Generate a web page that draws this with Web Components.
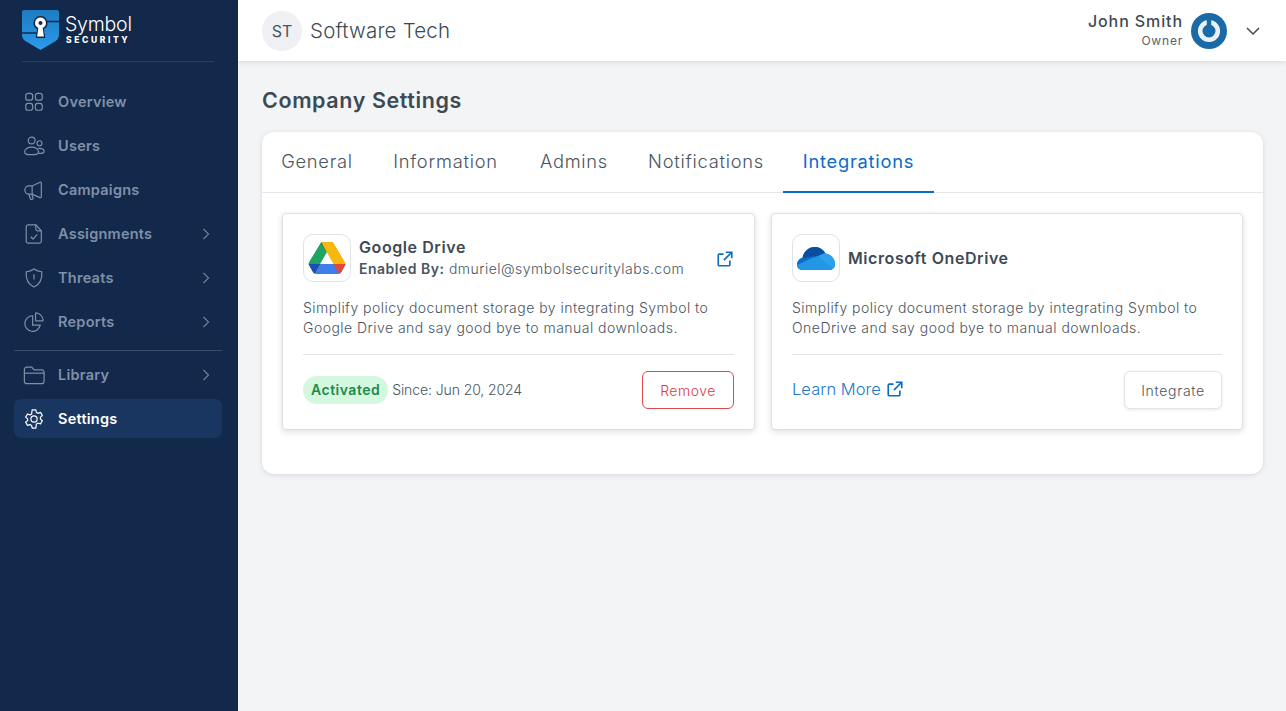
<!DOCTYPE html>
<html lang="en">
<head>
<meta charset="utf-8">
<title>Company Settings</title>
<style>
  html, body { margin: 0; height: 100%; }
  body { font-family: "Inter", "Liberation Sans", sans-serif; background: #f3f4f6; color: #3d4a55; }
</style>
</head>
<body>
<app-shell>
  <side-nav slot="nav">
    <nav-item label="Overview" icon="grid"></nav-item>
    <nav-item label="Users" icon="users"></nav-item>
    <nav-item label="Campaigns" icon="megaphone"></nav-item>
    <nav-item label="Assignments" icon="file" chevron></nav-item>
    <nav-item label="Threats" icon="shield" chevron></nav-item>
    <nav-item label="Reports" icon="pie" chevron></nav-item>
    <nav-divider></nav-divider>
    <nav-item label="Library" icon="folder" chevron></nav-item>
    <nav-item label="Settings" icon="gear" active></nav-item>
  </side-nav>
  <top-bar slot="top"></top-bar>
  <settings-page>
    <integration-card name="Google Drive" logo="drive" by="dmuriel@symbolsecuritylabs.com">
      Simplify policy document storage by integrating Symbol to<br>Google Drive and say good bye to manual downloads.
    </integration-card>
    <integration-card name="Microsoft OneDrive" logo="onedrive">
      Simplify policy document storage by integrating Symbol to<br>OneDrive and say good bye to manual downloads.
    </integration-card>
  </settings-page>
</app-shell>

<script>
const ICONS = {
  grid: '<rect x="3" y="2.500" width="7.500" height="7.500" rx="2.500"/><rect x="13.500" y="2.500" width="7.500" height="7.500" rx="2.500"/><rect x="3" y="13.500" width="7.500" height="7.500" rx="2.500"/><rect x="13.500" y="13.500" width="7.500" height="7.500" rx="2.500"/>',
  users: '<circle cx="9.500" cy="6" r="3.700"/><circle cx="18" cy="9" r="2.700"/><path d="M6.500 21.500c-3 0-4.700-1.200-4.700-3.100 0-3 3.300-5.200 7.600-5.200 4.200 0 7.500 2.200 7.500 5.200 0 1.900-1.700 3.100-4.700 3.100z"/><path d="M16.500 14.600c.6-.1 1-.1 1.500-.1 3 0 5 1.400 5 3.300 0 1.400-1.300 2.200-3.300 2.200h-3"/>',
  megaphone: '<path d="M18.500 3.500 10 7.600H6.500a4.500 4.500 0 0 0 0 9H10l8.500 3.700c.8.300 1.500-.1 1.500-1V4.500c0-.9-.7-1.300-1.500-1z"/><path d="M10 7.600v9"/><path d="M6.500 16.600 8 21.500c.2.700.9 1 1.600.8l.5-.2c.7-.2 1-.9.8-1.500L9.700 16.600"/>',
  file: '<path d="M5.500 2h8.500l6 6.500V20a2 2 0 0 1-2 2H5.500a2 2 0 0 1-2-2V4a2 2 0 0 1 2-2z"/><path d="M14 2v4.500a2 2 0 0 0 2 2h4"/><path d="m8.500 15 2.500 2.500 4.500-5"/>',
  shield: '<path d="M12 2.200c2.300 1.700 5 2.700 8.500 3 .6 7.800-1.800 13.500-8.500 16.600C5.300 18.700 2.900 13 3.500 5.200c3.500-.3 6.200-1.300 8.500-3z"/><path d="M12 8v5.500M12 16.300v.4"/>',
  pie: '<path d="M10.500 5.200a8.500 8.500 0 1 0 8.300 10.300H10.500z"/><path d="M14 2c4.200.2 7.600 3.600 8 8 0 .5-.3.800-.8.800H14.500a.8.800 0 0 1-.8-.8V2.800c0-.5-.2-.8.300-.8z"/>',
  folder: '<path d="M1.500 6a2.500 2.500 0 0 1 2.500-2.500h5.500l2.500 3h9A2.500 2.500 0 0 1 23 9v10a2.500 2.500 0 0 1-2.500 2.500H4A2.500 2.500 0 0 1 1.500 19z"/><path d="M1.500 10h21.500"/>',
  gear: '<circle cx="12" cy="12" r="3.400"/><path d="M10 2h4l.6 2.900 1.700.9 2.800-1 2 3.400-2.200 2 .1 1.800 2.100 1.900-2 3.400-2.800-.9-1.700 1L14 22h-4l-.6-3-1.700-.9-2.800.9-2-3.400 2.200-1.900v-1.800l-2.200-2 2-3.400 2.800 1 1.700-1z" stroke-linejoin="round"/>'
};

function define(name, css, html) {
  customElements.define(name, class extends HTMLElement {
    connectedCallback() {
      if (this.shadowRoot) return;
      this.attachShadow({ mode: 'open' });
      this.shadowRoot.innerHTML = '<style>' + css + '</style>' + (typeof html === 'function' ? html(this) : html);
    }
  });
}

define('app-shell', `
  :host { display: grid; grid-template-columns: 238px 1fr; grid-template-rows: 61px 1fr; height: 711px; overflow: hidden; }
  .nav { grid-row: 1 / 3; display: flex; }
  .top { position: relative; z-index: 1; }
`, `<div class="nav"><slot name="nav"></slot></div><div class="top"><slot name="top"></slot></div><main><slot></slot></main>`);

define('side-nav', `
  :host { display: block; width: 238px; box-sizing: border-box; background: #13294b; padding: 0 16px 0 14px; }
  .logo { display: flex; align-items: flex-start; height: 62px; box-sizing: border-box; margin: 0 0 0 8px; padding-top: 10px; border-bottom: 1px solid #2a3f60; width: 192px; }
  svg { display: block; flex: none; }
  .word { margin-left: 6px; color: #fff; line-height: 1; padding-top: 4px; }
  .sym { font-size: 19.500px; font-weight: 300; display: block; letter-spacing: -.2px; line-height: 20px; }
  .sec { font-size: 8.500px; font-weight: 800; letter-spacing: 2.600px; display: block; line-height: 9px; margin-top: 2px; margin-left: 1px; }
  .items { padding-top: 18px; }
`, `
  <div class="logo">
    <svg width="37" height="40" viewBox="0 0 37 40">
      <defs><linearGradient id="g" x1="0" y1="0" x2="0" y2="1"><stop offset="0" stop-color="#1e7cc0"/><stop offset="1" stop-color="#2a9bec"/></linearGradient></defs>
      <path d="M2 0h33a2 2 0 0 1 2 2v22c0 4-1.500 6-5 8l-13.500 8L5 32c-3.500-2-5-4-5-8V2a2 2 0 0 1 2-2z" fill="url(#g)"/>
      <path d="M0 23h15M22 11.500h15" stroke="#13294b" stroke-width="1.500"/>
      <path d="M18.500 6a7 7 0 0 1 3.400 13.100l1.400 8.900h-9.600l1.400-8.900A7 7 0 0 1 18.500 6z" fill="#13294b"/>
      <path d="M18.500 7.500a5.500 5.500 0 0 1 2.200 10.500l1.200 8.500h-6.800l1.200-8.500a5.500 5.500 0 0 1 2.200-10.500z" fill="#fff"/>
      <circle cx="18.500" cy="13" r="2" fill="#13294b"/>
    </svg>
    <div class="word"><span class="sym">Symbol</span><span class="sec">SECURITY</span></div>
  </div>
  <div class="items"><slot></slot></div>
`);

define('nav-divider', `
  :host { display: block; height: 1px; background: #3a4e6c; margin: 6px 0 2px; }
`, ``);

define('nav-item', `
  :host { display: flex; align-items: center; height: 44px; color: #7f90a8; font-size: 14.500px; font-weight: 600; letter-spacing: .25px; box-sizing: border-box; padding: 0 9px 0 9px; border-radius: 7px; }
  :host([active]) { background: #183660; color: #fff; height: 39px; margin-top: 2px; }
  svg.i { width: 22px; height: 22px; margin-right: 13px; fill: none; stroke: currentColor; stroke-width: 1.300; flex: none; }
  span { flex: 1; padding-bottom: 1px; }
  svg.c { width: 14px; height: 14px; fill: none; stroke: #6e7f98; stroke-width: 1.200; }
`, (el) => `
  <svg class="i" viewBox="0 0 24 24">${ICONS[el.getAttribute('icon')]}</svg>
  <span>${el.getAttribute('label')}</span>
  ${el.hasAttribute('chevron') ? '<svg class="c" viewBox="0 0 14 14"><path d="m4.500 2 5 5-5 5"/></svg>' : ''}
`);

define('top-bar', `
  :host { display: flex; align-items: center; height: 61px; box-sizing: border-box; background: #fff; box-shadow: 0 1px 5px rgba(30,40,60,.14); padding: 0 24px; }
  .av { width: 40px; height: 40px; border-radius: 50%; background: #eef0f3; color: #4a5560; display: flex; align-items: center; justify-content: center; font-size: 16px; }
  .co { font-size: 20.500px; font-weight: 300; margin-left: 8px; letter-spacing: .2px; color: #3d4a55; flex: 1; }
  .who { text-align: right; margin-right: 8px; padding-bottom: 2px; }
  .n { font-size: 16px; font-weight: 500; letter-spacing: .9px; line-height: 20px; color: #3d4a55; }
  .r { font-size: 12px; font-weight: 400; line-height: 16px; margin-top: 2px; color: #56626d; letter-spacing: .8px; }
  .chev { width: 16px; height: 16px; margin: 0 1px 0 18px; fill: none; stroke: #3d4a55; stroke-width: 1.500; }
`, `
  <div class="av">ST</div>
  <div class="co">Software Tech</div>
  <div class="who"><div class="n">John Smith</div><div class="r">Owner</div></div>
  <svg width="36" height="36" viewBox="0 0 36 36">
    <circle cx="18" cy="18" r="18" fill="#1a6aa8"/>
    <circle cx="18" cy="18" r="8.800" fill="none" stroke="#e9f1f7" stroke-width="4.600"/>
    <path d="M18 5.500v11" stroke="#1a6aa8" stroke-width="4.400" stroke-linecap="round"/>
  </svg>
  <svg class="chev" viewBox="0 0 16 16"><path d="m2 5 6 6 6-6"/></svg>
`);

define('settings-page', `
  :host { display: block; padding: 24px 23px 0 24px; }
  h1 { margin: 0 0 17px; font-size: 21.500px; line-height: 30px; font-weight: 600; color: #3d4a55; letter-spacing: .6px; }
  .panel { background: #fff; border-radius: 12px; box-shadow: 0 1px 5px rgba(30,40,60,.14); height: 342px; }
  .list { display: grid; grid-template-columns: 473px 472px; gap: 16px; padding: 20px; }
`, `
  <h1>Company Settings</h1>
  <div class="panel">
    <tab-bar></tab-bar>
    <div class="list"><slot></slot></div>
  </div>
`);

define('tab-bar', `
  :host { display: grid; grid-template-columns: 110px 147px 110px 154px 151px; height: 61px; box-sizing: border-box; border-bottom: 1px solid #e5e7eb; }
  a { display: flex; align-items: center; justify-content: center; height: 60px; padding-bottom: 2px; font-size: 18.300px; font-weight: 300; color: #4a5560; letter-spacing: .75px; box-sizing: border-box; white-space: nowrap; }
  a.on { color: #0b6cc7; font-weight: 400; border-bottom: 2px solid #0b6cc7; height: 61px; padding-bottom: 1px; }
`, `<a>General</a><a>Information</a><a>Admins</a><a>Notifications</a><a class="on">Integrations</a>`);

const EXT = '<path d="M13 3h8v8"/><path d="M21 3 10.500 13.500"/><path d="M18.500 14v5.500a1.500 1.500 0 0 1-1.500 1.500H4.500A1.500 1.500 0 0 1 3 19.500V7a1.500 1.500 0 0 1 1.500-1.500H10"/>';

const LOGOS = {
  drive: `<svg width="38" height="34" viewBox="0 0 38 34">
    <defs><clipPath id="tri"><path d="M15 1h8q2 0 3 1.700L37 21q1 1.800.1 3.500l-3.600 6.500q-1.300 2-3.500 2H8q-2.200 0-3.500-2L1 24.500q-1-1.700 0-3.500L12 2.700q1-1.700 3-1.700z"/></clipPath></defs>
    <g clip-path="url(#tri)">
      <path d="M13 1 19 11 8 30 0 22.500z" fill="#1fa463"/>
      <path d="M11 0h16l-8 11z" fill="#0f6b3f"/>
      <path d="M25 0 38 23H25.500L13 1z" fill="#f6b80f"/>
      <path d="M12.500 23H38l-6 11H6.500z" fill="#3d7ee8"/>
      <path d="M0 23h12.500L6.500 34z" fill="#1c4fae"/>
      <path d="M25.500 23H38l-6 11z" fill="#e4463a"/>
    </g>
  </svg>`,
  onedrive: `<svg width="38" height="24" viewBox="0 0 38 24">
    <defs><clipPath id="cl"><path d="M5.500 24C2 24 0 21.500 0 18.500 0 15 2.500 12.500 5.500 11.500 7 5 12 1 18 1c4.500 0 8 2.500 10.500 6.500C33 8 38 12.500 38 18c0 3.500-2.500 6-5.500 6z"/></clipPath></defs>
    <g clip-path="url(#cl)">
      <rect width="38" height="24" fill="#0a6cc4"/>
      <path d="M6 12 15 10.500 21 10 28 7V0H6z" fill="#0a4ea3"/>
      <path d="M15 12 28 8 38 10V24H0V19z" fill="#2496e6"/>
      <path d="M21 10 28 7 38 10V24z" fill="#2ca0ea"/>
    </g>
  </svg>`
};

define('integration-card', `
  :host { display: block; height: 217px; box-sizing: border-box; background: #fff; border: 1px solid #dcdfe3; border-radius: 4px; box-shadow: 0 2px 6px rgba(30,40,60,.15); padding: 20px; }
  .head { display: flex; align-items: center; height: 48px; }
  .logo { width: 48px; height: 48px; box-sizing: border-box; border: 1px solid #dfe2e6; border-radius: 10px; display: flex; align-items: center; justify-content: center; flex: none; margin-right: 8px; }
  .info { flex: 1; min-width: 0; }
  .t { font-size: 16px; font-weight: 600; color: #3d4a55; line-height: 20px; letter-spacing: .58px; }
  .by { font-size: 14px; font-weight: 300; color: #4a5560; line-height: 20px; letter-spacing: .49px; margin-top: 2px; white-space: nowrap; }
  .by b { font-weight: 600; letter-spacing: .5px; }
  .ext { width: 18px; height: 18px; fill: none; stroke: #0b6cc7; stroke-width: 2.200; flex: none; margin: 2px 0 0; }
  .desc { font-size: 14px; font-weight: 300; color: #4a5560; line-height: 20px; letter-spacing: .47px; margin-top: 16px; padding-bottom: 16px; border-bottom: 1px solid #e2e4e7; white-space: nowrap; }
  .foot { display: flex; align-items: center; height: 38px; margin-top: 16px; font-size: 14px; font-weight: 300; color: #4a5560; }
  .since { letter-spacing: -.1px; padding-bottom: 2px; }
  .badge { background: #d3f7df; color: #1f8a4c; font-weight: 600; border-radius: 14px; padding: 0 8px 1px; height: 28px; box-sizing: border-box; display: flex; align-items: center; margin-right: 4px; letter-spacing: .5px; }
  .grow { flex: 1; }
  button { font: inherit; font-weight: 300; height: 38px; border-radius: 6px; background: #fff; letter-spacing: .5px; }
  .rm { width: 92px; color: #e03a3a; border: 1px solid #d94b4b; }
  .int { width: 98px; color: #4a5560; border: 1px solid #e2e4e7; box-shadow: 0 1px 3px rgba(30,40,60,.1); letter-spacing: .7px; }
  .lm { color: #1c78c8; font-size: 16.500px; letter-spacing: .05px; display: flex; align-items: center; padding-bottom: 2px; }
  .lm svg { width: 18px; height: 18px; fill: none; stroke: #0b6cc7; stroke-width: 2.200; margin-left: 5px; }
`, (el) => {
  const by = el.getAttribute('by');
  return `
  <div class="head">
    <div class="logo">${LOGOS[el.getAttribute('logo')]}</div>
    <div class="info">
      <div class="t">${el.getAttribute('name')}</div>
      ${by ? `<div class="by"><b>Enabled By:</b> ${by}</div>` : ''}
    </div>
    ${by ? `<svg class="ext" viewBox="0 0 24 24">${EXT}</svg>` : ''}
  </div>
  <div class="desc"><slot></slot></div>
  <div class="foot">
    ${by
      ? `<span class="badge">Activated</span><span class="since">Since: Jun 20, 2024</span><span class="grow"></span><button class="rm">Remove</button>`
      : `<span class="lm">Learn More<svg viewBox="0 0 24 24">${EXT}</svg></span><span class="grow"></span><button class="int">Integrate</button>`}
  </div>`;
});
</script>
</body>
</html>
